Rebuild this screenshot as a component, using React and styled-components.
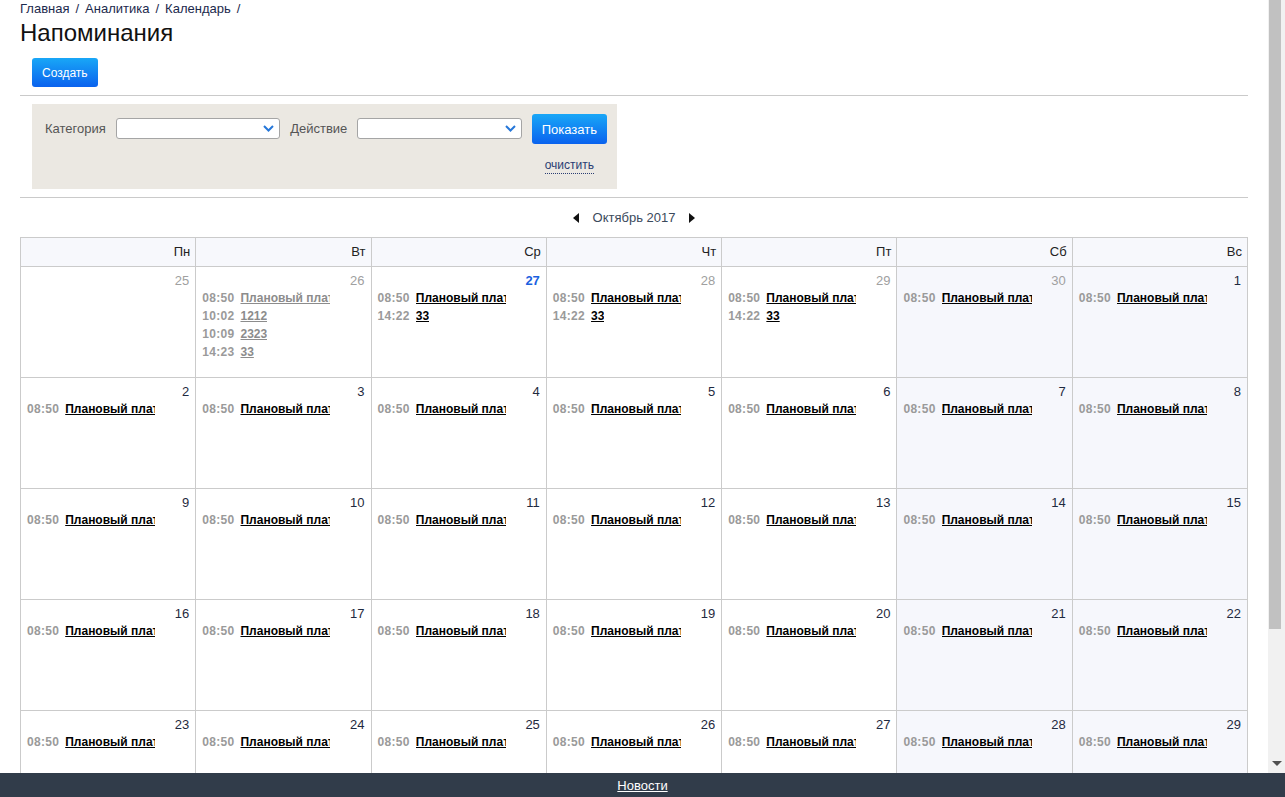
import React from "react";
import styled, { createGlobalStyle } from "styled-components";

const GlobalStyle = createGlobalStyle`
  html, body, #root {
    margin: 0;
    height: 100%;
  }
  body {
    font-family: "Liberation Sans", Arial, sans-serif;
    color: #222;
    background: #fff;
  }
`;

const WEEK_DAYS = ["Пн", "Вт", "Ср", "Чт", "Пт", "Сб", "Вс"];

const plan = { time: "08:50", title: "Плановый платеж" };

const buildDays = () => {
  const days = [];
  const start = new Date(2017, 8, 25);
  for (let i = 0; i < 42; i++) {
    const d = new Date(start);
    d.setDate(start.getDate() + i);
    const num = d.getDate();
    const month = d.getMonth();
    let events = [plan];
    let muted = false;
    if (month === 8 && num === 25) events = [];
    if (month === 8 && num === 26) {
      muted = true;
      events = [
        plan,
        { time: "10:02", title: "1212" },
        { time: "10:09", title: "2323" },
        { time: "14:23", title: "33" },
      ];
    }
    if (month === 8 && num >= 27 && num <= 29) {
      events = [plan, { time: "14:22", title: "33" }];
    }
    days.push({
      key: i,
      num,
      other: month !== 9,
      today: month === 8 && num === 27,
      weekend: i % 7 >= 5,
      muted,
      events,
    });
  }
  return days;
};

const days = buildDays();

const Chevron = () => (
  <svg width="11" height="7" viewBox="0 0 11 7">
    <path d="M1 1l4.5 4.5L10 1" fill="none" stroke="#2677d9" strokeWidth="2" />
  </svg>
);

const Arrow = ({ dir }) => (
  <svg width="6" height="10" viewBox="0 0 6 10">
    {dir === "left" ? <polygon points="6,0 0,5 6,10" fill="#111" /> : <polygon points="0,0 6,5 0,10" fill="#111" />}
  </svg>
);

const App = () => {
  return (
    <Layout>
      <GlobalStyle />
      <Body>
        <Main>
          <Breadcrumbs>
            <Crumb href="#">Главная</Crumb>
            <Sep>/</Sep>
            <Crumb href="#">Аналитика</Crumb>
            <Sep>/</Sep>
            <Crumb href="#">Календарь</Crumb>
            <Sep>/</Sep>
          </Breadcrumbs>
          <Title>Напоминания</Title>
          <Button size="small">Создать</Button>
          <Rule />
          <Filter>
            <FilterRow>
              <Label>Категория</Label>
              <Select>
                <Chevron />
              </Select>
              <Label>Действие</Label>
              <Select>
                <Chevron />
              </Select>
              <ActionColumn>
                <Button>Показать</Button>
                <ClearLink href="#">очистить</ClearLink>
              </ActionColumn>
            </FilterRow>
          </Filter>
          <Rule />
          <MonthNav>
            <Arrow dir="left" />
            <MonthName>Октябрь 2017</MonthName>
            <Arrow dir="right" />
          </MonthNav>
          <Calendar>
            {WEEK_DAYS.map((d) => (
              <HeadCell key={d}>{d}</HeadCell>
            ))}
            {days.map((day) => (
              <DayCell key={day.key} $weekend={day.weekend}>
                <DayNum $other={day.other} $today={day.today}>
                  {day.num}
                </DayNum>
                {day.events.map((ev, i) => (
                  <Entry key={i}>
                    <Time>{ev.time}</Time>
                    <EventLink href="#" $muted={day.muted}>
                      {ev.title}
                    </EventLink>
                  </Entry>
                ))}
              </DayCell>
            ))}
          </Calendar>
        </Main>
        <ScrollRail>
          <ScrollThumb />
          <svg width="10" height="5" viewBox="0 0 10 5">
            <polygon points="0,0 10,0 5,5" fill="#505050" />
          </svg>
        </ScrollRail>
      </Body>
      <Footer>
        <FooterLink href="#">Новости</FooterLink>
      </Footer>
    </Layout>
  );
};

export default App;

const Layout = styled.div`
  display: flex;
  flex-direction: column;
  height: 100vh;
`;

const Body = styled.div`
  flex: 1;
  min-height: 0;
  display: flex;
`;

const Main = styled.main`
  flex: 1;
  min-width: 0;
  overflow-y: auto;
  scrollbar-width: none;
  padding: 0 20px 16px;

  &::-webkit-scrollbar {
    display: none;
  }
`;

const ScrollRail = styled.div`
  width: 17px;
  flex-shrink: 0;
  background: #f1f1f1;
  display: flex;
  flex-direction: column;
  align-items: center;
  justify-content: space-between;
  padding-bottom: 7px;
  box-sizing: border-box;
`;

const ScrollThumb = styled.div`
  width: 12px;
  margin-right: 3px;
  height: 629px;
  background: #c1c1c1;
`;

const Breadcrumbs = styled.div`
  font-size: 13px;
  line-height: 17px;
`;

const Crumb = styled.a`
  color: #1c2a4d;
  text-decoration: none;
`;

const Sep = styled.span`
  color: #1c2a4d;
  margin: 0 6px;
`;

const Title = styled.h1`
  margin: 2px 0 0;
  font-size: 24px;
  line-height: 28px;
  font-weight: normal;
  color: #111;
`;

const Button = styled.button`
  display: inline-flex;
  align-items: center;
  justify-content: center;
  height: ${({ size }) => (size === "small" ? "29px" : "30px")};
  padding: 0 10px;
  margin: ${({ size }) => (size === "small" ? "11px 0 0 12px" : "0")};
  border: none;
  border-radius: 3px;
  background: linear-gradient(#19a7f7, #0a62ee);
  color: #fff;
  font-family: inherit;
  font-size: ${({ size }) => (size === "small" ? "12px" : "13px")};
  cursor: pointer;
`;

const Rule = styled.hr`
  margin: 8px 0 0;
  border: none;
  border-top: 1px solid #cacaca;
`;

const Filter = styled.div`
  margin: 8px 0 0 12px;
  width: 585px;
  height: 85px;
  box-sizing: border-box;
  padding: 10px 10px 0 13px;
  background: #ebe8e2;
`;

const FilterRow = styled.div`
  display: flex;
  align-items: flex-start;
`;

const Label = styled.span`
  font-size: 13px;
  line-height: 30px;
  color: #555;
  margin-right: 10px;
`;

const Select = styled.div`
  width: 167px;
  height: 21px;
  margin: 4px 10px 0 0;
  box-sizing: border-box;
  border: 1px solid #a5a5a5;
  border-radius: 3px;
  background: #fff;
  display: flex;
  align-items: center;
  justify-content: flex-end;
  padding-right: 5px;
`;

const ActionColumn = styled.div`
  display: flex;
  flex-direction: column;
  align-items: center;
  gap: 14px;
`;

const ClearLink = styled.a`
  font-size: 12px;
  line-height: 15px;
  color: #2a3d73;
  text-decoration: none;
  border-bottom: 1px dotted #2a3d73;
`;

const MonthNav = styled.div`
  margin-top: 11px;
  display: flex;
  align-items: center;
  justify-content: center;
  gap: 14px;
  height: 17px;
`;

const MonthName = styled.span`
  font-size: 13px;
  color: #3b4a5c;
`;

const Calendar = styled.div`
  margin-top: 11px;
  display: grid;
  grid-template-columns: repeat(7, minmax(0, 1fr));
  grid-auto-rows: 111px;
  grid-template-rows: 29px;
  border-top: 1px solid #cbcbcb;
  border-left: 1px solid #cbcbcb;
`;

const HeadCell = styled.div`
  border-right: 1px solid #cbcbcb;
  border-bottom: 1px solid #cbcbcb;
  background: #f7f8fc;
  font-size: 13px;
  line-height: 28px;
  text-align: right;
  padding-right: 5px;
  color: #222;
`;

const DayCell = styled.div`
  border-right: 1px solid #cbcbcb;
  border-bottom: 1px solid #cbcbcb;
  background: ${({ $weekend }) => ($weekend ? "#f6f7fc" : "#fff")};
  padding: 5px 6px;
  overflow: hidden;
`;

const DayNum = styled.div`
  text-align: right;
  font-size: 13px;
  line-height: 17px;
  font-weight: ${({ $today }) => ($today ? "bold" : "normal")};
  color: ${({ $today, $other }) => ($today ? "#1a5fe0" : $other ? "#a0a0a0" : "#1f2a40")};
`;

const Entry = styled.div`
  font-size: 12px;
  line-height: 18px;
  font-weight: bold;
  white-space: nowrap;
`;

const Time = styled.span`
  color: #9a9a9a;
  margin-right: 6px;
  letter-spacing: 0.3px;
`;

const EventLink = styled.a`
  display: inline-block;
  max-width: 90px;
  overflow: hidden;
  vertical-align: top;
  color: ${({ $muted }) => ($muted ? "#8c8c8c" : "#000")};
  text-decoration: underline;
`;

const Footer = styled.footer`
  height: 24px;
  background: #313c4a;
  display: flex;
  align-items: center;
  justify-content: center;
`;

const FooterLink = styled.a`
  color: #fff;
  font-size: 13px;
  text-decoration: underline;
`;
